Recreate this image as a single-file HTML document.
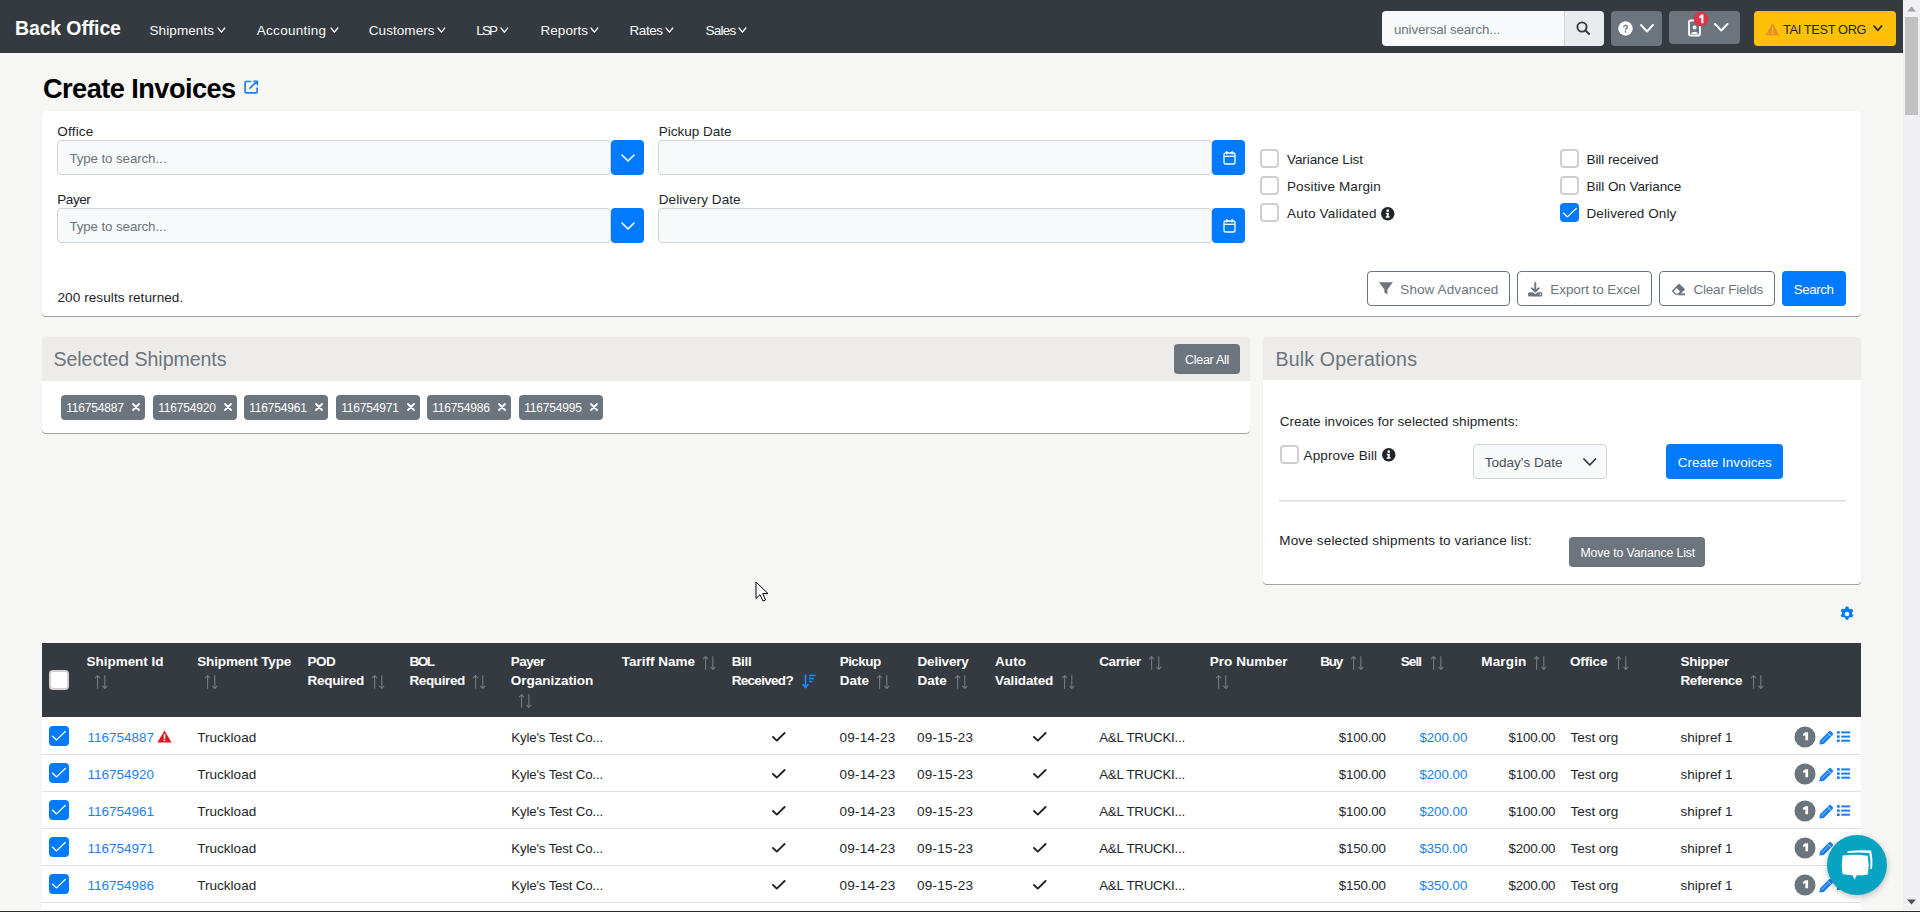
<!DOCTYPE html><html><head><meta charset="utf-8"><title>Create Invoices</title><style>
html,body{margin:0;padding:0}
body{width:1920px;height:912px;overflow:hidden;position:relative;background:#f6f6f5;font-family:"Liberation Sans",sans-serif;color:#212529}
.t{position:absolute;white-space:nowrap}
.r{position:absolute;box-sizing:border-box}
svg.r{overflow:visible}
</style></head><body>
<div class="r" style="left:0px;top:0px;width:1903px;height:53px;background:#343a40;"></div>
<div class="t" style="left:15.0px;top:17.44px;font-size:19.5px;line-height:23px;color:#fff;font-weight:700;letter-spacing:-0.135px;">Back Office</div>
<div class="t" style="left:149.5px;top:23.32px;font-size:13.5px;line-height:16px;color:#f8f9fa;letter-spacing:0.089px;">Shipments</div>
<svg class="r" style="left:215.5px;top:25.9px;" width="10.8" height="8.2" viewBox="0 0 10.8 8.2"><polyline points="2,2 5.4,6.2 8.8,2" fill="none" stroke="#f8f9fa" stroke-width="1.35" stroke-linecap="round" stroke-linejoin="round"/></svg>
<div class="t" style="left:256.8px;top:23.32px;font-size:13.5px;line-height:16px;color:#f8f9fa;letter-spacing:0.275px;">Accounting</div>
<svg class="r" style="left:328.5px;top:25.9px;" width="10.8" height="8.2" viewBox="0 0 10.8 8.2"><polyline points="2,2 5.4,6.2 8.8,2" fill="none" stroke="#f8f9fa" stroke-width="1.35" stroke-linecap="round" stroke-linejoin="round"/></svg>
<div class="t" style="left:368.8px;top:23.32px;font-size:13.5px;line-height:16px;color:#f8f9fa;letter-spacing:0.06px;">Customers</div>
<svg class="r" style="left:435.5px;top:25.9px;" width="10.8" height="8.2" viewBox="0 0 10.8 8.2"><polyline points="2,2 5.4,6.2 8.8,2" fill="none" stroke="#f8f9fa" stroke-width="1.35" stroke-linecap="round" stroke-linejoin="round"/></svg>
<div class="t" style="left:476.3px;top:23.32px;font-size:13.5px;line-height:16px;color:#f8f9fa;letter-spacing:-1.883px;">LSP</div>
<svg class="r" style="left:499.3px;top:25.9px;" width="10.8" height="8.2" viewBox="0 0 10.8 8.2"><polyline points="2,2 5.4,6.2 8.8,2" fill="none" stroke="#f8f9fa" stroke-width="1.35" stroke-linecap="round" stroke-linejoin="round"/></svg>
<div class="t" style="left:540.5px;top:23.32px;font-size:13.5px;line-height:16px;color:#f8f9fa;letter-spacing:0.042px;">Reports</div>
<svg class="r" style="left:589.0px;top:25.9px;" width="10.8" height="8.2" viewBox="0 0 10.8 8.2"><polyline points="2,2 5.4,6.2 8.8,2" fill="none" stroke="#f8f9fa" stroke-width="1.35" stroke-linecap="round" stroke-linejoin="round"/></svg>
<div class="t" style="left:629.5px;top:23.32px;font-size:13.5px;line-height:16px;color:#f8f9fa;letter-spacing:-0.434px;">Rates</div>
<svg class="r" style="left:664.3px;top:25.9px;" width="10.8" height="8.2" viewBox="0 0 10.8 8.2"><polyline points="2,2 5.4,6.2 8.8,2" fill="none" stroke="#f8f9fa" stroke-width="1.35" stroke-linecap="round" stroke-linejoin="round"/></svg>
<div class="t" style="left:705.5px;top:23.32px;font-size:13.5px;line-height:16px;color:#f8f9fa;letter-spacing:-0.75px;">Sales</div>
<svg class="r" style="left:737.3px;top:25.9px;" width="10.8" height="8.2" viewBox="0 0 10.8 8.2"><polyline points="2,2 5.4,6.2 8.8,2" fill="none" stroke="#f8f9fa" stroke-width="1.35" stroke-linecap="round" stroke-linejoin="round"/></svg>
<div class="r" style="left:1382px;top:11px;width:182px;height:35px;background:#f8f9fa;border-radius:4px 0 0 4px;"></div>
<div class="t" style="left:1394.0px;top:21.89px;font-size:13.3px;line-height:16px;color:#6c757d;letter-spacing:-0.096px;">universal search...</div>
<div class="r" style="left:1564px;top:11px;width:40px;height:35px;background:#e9ecef;border-radius:0 4px 4px 0;border-left:1px solid #ced4da;"></div>
<svg class="r" style="left:1576px;top:21px;" width="14" height="15" viewBox="0 0 14 15"><circle cx="6" cy="6" r="4.6" fill="none" stroke="#343a40" stroke-width="1.9"/><line x1="9.4" y1="9.4" x2="13" y2="13" stroke="#343a40" stroke-width="2" stroke-linecap="round"/></svg>
<div class="r" style="left:1611px;top:11px;width:51px;height:35px;background:#6c757d;border-radius:4px;"></div>
<svg class="r" style="left:1618px;top:21px;" width="15" height="15" viewBox="0 0 15 15"><circle cx="7.5" cy="7.5" r="7.2" fill="#fff"/><path d="M5.8,6.1 a1.8,1.8 0 1 1 2.6,1.6 c-0.6,0.3 -0.9,0.6 -0.9,1.3" fill="none" stroke="#6c757d" stroke-width="1.3" stroke-linecap="round"/><circle cx="7.5" cy="10.9" r="0.8" fill="#6c757d"/></svg>
<svg class="r" style="left:1639px;top:22.5px;" width="16" height="10.5" viewBox="0 0 16 10.5"><polyline points="2,2 8.0,8.5 14,2" fill="none" stroke="#fff" stroke-width="1.9" stroke-linecap="round" stroke-linejoin="round"/></svg>
<div class="r" style="left:1669px;top:11px;width:71px;height:33px;background:#6c757d;border-radius:4px;"></div>
<svg class="r" style="left:1686px;top:17px;" width="17" height="20" viewBox="0 0 17 20"><path d="M4.5,3.5 h8 a1.5,1.5 0 0 1 1.5,1.5 v12 a1.5,1.5 0 0 1 -1.5,1.5 h-8 a1.5,1.5 0 0 1 -1.5,-1.5 v-12 a1.5,1.5 0 0 1 1.5,-1.5z" fill="none" stroke="#fff" stroke-width="1.8"/><circle cx="8.5" cy="10.5" r="2" fill="#fff"/><path d="M4.5,17 q4,-4.5 8,0z" fill="#fff"/></svg>
<svg class="r" style="left:1693px;top:11px;" width="16" height="16" viewBox="0 0 16 16"><circle cx="8" cy="8" r="7.3" fill="#dc3545"/><path d="M8.3,3.6 H10.4 V12.2 H8.3 V6.6 L6.2,7.5 V5.4 Z" fill="#fff"/></svg>
<svg class="r" style="left:1713px;top:21.5px;" width="16.5" height="10.5" viewBox="0 0 16.5 10.5"><polyline points="2,2 8.25,8.5 14.5,2" fill="none" stroke="#fff" stroke-width="1.9" stroke-linecap="round" stroke-linejoin="round"/></svg>
<div class="r" style="left:1754px;top:11px;width:142px;height:35px;background:#ffc107;border-radius:4px;"></div>
<svg class="r" style="left:1765px;top:22px;" width="15" height="14" viewBox="0 0 15 14"><path d="M7.5,1 L14.5,13.5 H0.5 Z" fill="#e8912a"/><rect x="6.8" y="5" width="1.4" height="4.5" fill="#ffc107"/><rect x="6.8" y="10.5" width="1.4" height="1.5" fill="#ffc107"/></svg>
<div class="t" style="left:1783.0px;top:22.46px;font-size:12.8px;line-height:15px;color:#212529;letter-spacing:-0.363px;">TAI TEST ORG</div>
<svg class="r" style="left:1871.8px;top:23.6px;" width="11.6" height="8.4" viewBox="0 0 11.6 8.4"><polyline points="2,2 5.8,6.4 9.6,2" fill="none" stroke="#2b2f33" stroke-width="1.8" stroke-linecap="round" stroke-linejoin="round"/></svg>
<div class="r" style="left:1903px;top:0px;width:17px;height:912px;background:#f0f0f2;"></div>
<svg class="r" style="left:1906px;top:6px;" width="11" height="6" viewBox="0 0 11 6"><path d="M5.5,0.5 L10,5.5 H1 Z" fill="#a3a3a3"/></svg>
<div class="r" style="left:1905px;top:17px;width:13px;height:98px;background:#c1c1c1;"></div>
<svg class="r" style="left:1906px;top:899px;" width="11" height="6" viewBox="0 0 11 6"><path d="M1,0.5 H10 L5.5,5.5 Z" fill="#505050"/></svg>
<div class="t" style="left:43.0px;top:71.98px;font-size:27.2px;line-height:33px;color:#000;font-weight:700;letter-spacing:-0.553px;">Create Invoices</div>
<svg class="r" style="left:243px;top:79px;" width="17" height="17" viewBox="0 0 17 17"><path d="M7.5,2.5 H3.1 a1,1 0 0 0 -1,1 V12.8 a1,1 0 0 0 1,1 H13.1 a1,1 0 0 0 1,-1 V9" fill="none" stroke="#1a7ff5" stroke-width="1.7" stroke-linecap="round"/><path d="M7,9.2 L12.6,3.6" fill="none" stroke="#1a7ff5" stroke-width="1.7" stroke-linecap="round"/><path d="M9.6,1.4 H15.1 V6.9 Z" fill="#1a7ff5"/></svg>
<div class="r" style="left:42px;top:111px;width:1819px;height:205px;background:#fff;border-radius:4px;box-shadow:0 1px 0.6px rgba(0,0,0,0.33),0 0 1px rgba(0,0,0,0.1);"></div>
<div class="t" style="left:57.3px;top:123.62px;font-size:13.5px;line-height:16px;color:#212529;letter-spacing:0.194px;">Office</div>
<div class="r" style="left:57px;top:140px;width:554px;height:35px;background:#f8f9fa;border:1px solid #ced4da;border-radius:4px;"></div>
<div class="t" style="left:69.4px;top:150.59px;font-size:13.3px;line-height:16px;color:#6c757d;letter-spacing:-0.085px;">Type to search...</div>
<div class="r" style="left:611px;top:140px;width:33px;height:35px;background:#007bff;border-radius:4px;"></div>
<svg class="r" style="left:620.2px;top:153px;" width="16" height="10" viewBox="0 0 16 10"><polyline points="2,2 8.0,8 14,2" fill="none" stroke="#fff" stroke-width="1.6" stroke-linecap="round" stroke-linejoin="round"/></svg>
<div class="t" style="left:57.3px;top:191.62px;font-size:13.5px;line-height:16px;color:#212529;letter-spacing:-0.459px;">Payer</div>
<div class="r" style="left:57px;top:208px;width:554px;height:35px;background:#f8f9fa;border:1px solid #ced4da;border-radius:4px;"></div>
<div class="t" style="left:69.4px;top:218.59px;font-size:13.3px;line-height:16px;color:#6c757d;letter-spacing:-0.085px;">Type to search...</div>
<div class="r" style="left:611px;top:208px;width:33px;height:35px;background:#007bff;border-radius:4px;"></div>
<svg class="r" style="left:620.2px;top:221px;" width="16" height="10" viewBox="0 0 16 10"><polyline points="2,2 8.0,8 14,2" fill="none" stroke="#fff" stroke-width="1.6" stroke-linecap="round" stroke-linejoin="round"/></svg>
<div class="t" style="left:658.8px;top:123.72px;font-size:13.5px;line-height:16px;color:#212529;letter-spacing:-0.006px;">Pickup Date</div>
<div class="r" style="left:658px;top:140px;width:554px;height:35px;background:#f8f9fa;border:1px solid #ced4da;border-radius:4px;"></div>
<div class="r" style="left:1212px;top:140px;width:33px;height:35px;background:#007bff;border-radius:4px;"></div>
<svg class="r" style="left:1222.5px;top:149.8px;" width="13" height="15" viewBox="0 0 13 15"><rect x="1" y="3" width="11" height="11" rx="1.6" fill="none" stroke="#fff" stroke-width="1.3"/><line x1="1" y1="6.3" x2="12" y2="6.3" stroke="#fff" stroke-width="1.3"/><line x1="3.8" y1="1" x2="3.8" y2="4.5" stroke="#fff" stroke-width="1.3"/><line x1="9.2" y1="1" x2="9.2" y2="4.5" stroke="#fff" stroke-width="1.3"/></svg>
<div class="t" style="left:658.8px;top:191.62px;font-size:13.5px;line-height:16px;color:#212529;letter-spacing:0.058px;">Delivery Date</div>
<div class="r" style="left:658px;top:208px;width:554px;height:35px;background:#f8f9fa;border:1px solid #ced4da;border-radius:4px;"></div>
<div class="r" style="left:1212px;top:208px;width:33px;height:35px;background:#007bff;border-radius:4px;"></div>
<svg class="r" style="left:1222.5px;top:217.8px;" width="13" height="15" viewBox="0 0 13 15"><rect x="1" y="3" width="11" height="11" rx="1.6" fill="none" stroke="#fff" stroke-width="1.3"/><line x1="1" y1="6.3" x2="12" y2="6.3" stroke="#fff" stroke-width="1.3"/><line x1="3.8" y1="1" x2="3.8" y2="4.5" stroke="#fff" stroke-width="1.3"/><line x1="9.2" y1="1" x2="9.2" y2="4.5" stroke="#fff" stroke-width="1.3"/></svg>
<div class="r" style="left:1260px;top:149px;width:19px;height:19px;background:#fff;border:2px solid #cfcfcf;border-radius:4px;"></div>
<div class="t" style="left:1287.0px;top:152.42px;font-size:13.5px;line-height:16px;color:#212529;letter-spacing:-0.085px;">Variance List</div>
<div class="r" style="left:1260px;top:176px;width:19px;height:19px;background:#fff;border:2px solid #cfcfcf;border-radius:4px;"></div>
<div class="t" style="left:1287.0px;top:179.42px;font-size:13.5px;line-height:16px;color:#212529;letter-spacing:0.102px;">Positive Margin</div>
<div class="r" style="left:1260px;top:203px;width:19px;height:19px;background:#fff;border:2px solid #cfcfcf;border-radius:4px;"></div>
<div class="t" style="left:1287.0px;top:206.42px;font-size:13.5px;line-height:16px;color:#212529;letter-spacing:0.207px;">Auto Validated</div>
<div class="r" style="left:1559.5px;top:149px;width:19.0px;height:19px;background:#fff;border:2px solid #cfcfcf;border-radius:4px;"></div>
<div class="t" style="left:1586.5px;top:152.42px;font-size:13.5px;line-height:16px;color:#212529;letter-spacing:-0.072px;">Bill received</div>
<div class="r" style="left:1559.5px;top:176px;width:19.0px;height:19px;background:#fff;border:2px solid #cfcfcf;border-radius:4px;"></div>
<div class="t" style="left:1586.5px;top:179.42px;font-size:13.5px;line-height:16px;color:#212529;letter-spacing:-0.066px;">Bill On Variance</div>
<div class="r" style="left:1559.5px;top:203px;width:19.0px;height:19px;background:#007bff;border-radius:4px;"></div>
<svg class="r" style="left:1559.5px;top:203px;" width="19" height="19" viewBox="0 0 19 19"><polyline points="3.4,10.1 7.5,13.9 16.3,5.5" fill="none" stroke="#fff" stroke-width="1.3" stroke-linecap="round" stroke-linejoin="round"/></svg>
<div class="t" style="left:1586.5px;top:206.42px;font-size:13.5px;line-height:16px;color:#212529;letter-spacing:0.095px;">Delivered Only</div>
<svg class="r" style="left:1381px;top:206.8px;" width="13.5" height="13.5" viewBox="0 0 13.5 13.5"><circle cx="6.75" cy="6.75" r="6.75" fill="#212529"/><circle cx="6.75" cy="3.6450000000000005" r="1.2825" fill="#fff"/><path d="M4.75,5.67 H7.75 V9.180000000000001 H8.55 V10.8 H4.75 V9.180000000000001 H5.75 V7.155 H4.75 Z" fill="#fff"/></svg>
<div class="r" style="left:1367px;top:271px;width:143px;height:35px;background:#fff;border:1px solid #6c757d;border-radius:4px;"></div>
<div class="t" style="left:1400.3px;top:281.62px;font-size:13.5px;line-height:16px;color:#6c757d;letter-spacing:0.1px;">Show Advanced</div>
<svg class="r" style="left:1379px;top:282px;" width="14" height="13" viewBox="0 0 14 13"><path d="M0,0.3 H13.9 L8.4,7.4 V12.6 L5.4,10.6 V7.4 Z" fill="#6c757d"/></svg>
<div class="r" style="left:1517px;top:271px;width:135px;height:35px;background:#fff;border:1px solid #6c757d;border-radius:4px;"></div>
<div class="t" style="left:1550.3px;top:281.62px;font-size:13.5px;line-height:16px;color:#6c757d;letter-spacing:-0.078px;">Export to Excel</div>
<svg class="r" style="left:1528px;top:281.5px;" width="15" height="15" viewBox="0 0 15 15"><path d="M7.3,1 V9.5 M3.8,6.2 L7.3,9.7 L10.8,6.2" fill="none" stroke="#6c757d" stroke-width="1.9" stroke-linecap="round" stroke-linejoin="round"/><path d="M1.5,10.3 H5 L7.3,12.3 L9.6,10.3 H12.8 a1.5,1.5 0 0 1 1.5,1.5 V12.9 a1.5,1.5 0 0 1 -1.5,1.5 H1.5 a1.5,1.5 0 0 1 -1.5,-1.5 V11.8 a1.5,1.5 0 0 1 1.5,-1.5 Z" fill="#6c757d"/><circle cx="12.3" cy="12.2" r="0.8" fill="#fff"/></svg>
<div class="r" style="left:1659px;top:271px;width:116px;height:35px;background:#fff;border:1px solid #6c757d;border-radius:4px;"></div>
<div class="t" style="left:1693.5px;top:281.62px;font-size:13.5px;line-height:16px;color:#6c757d;letter-spacing:-0.211px;">Clear Fields</div>
<svg class="r" style="left:1671px;top:282.5px;" width="15" height="13" viewBox="0 0 15 13"><path d="M0.7,8.1 L7.2,1.2 a1.1,1.1 0 0 1 1.6,0 L13.4,5.6 a1.1,1.1 0 0 1 0,1.6 L8.4,11.8 H4.2 Z" fill="#6c757d"/><path d="M2.7,8.1 L5.6,5.1 L9,8.6 L7,10.4 H4.6 Z" fill="#fff"/><rect x="7.6" y="10.4" width="6.4" height="1.9" fill="#6c757d"/></svg>
<div class="r" style="left:1782px;top:271px;width:64px;height:35px;background:#007bff;border-radius:4px;"></div>
<div class="t" style="left:1793.8px;top:281.69px;font-size:13.3px;line-height:16px;color:#fff;letter-spacing:-0.412px;">Search</div>
<div class="t" style="left:57.5px;top:289.69px;font-size:13.6px;line-height:16px;color:#212529;letter-spacing:0.054px;">200 results returned.</div>
<div class="r" style="left:42px;top:337px;width:1208px;height:96px;background:#fff;border-radius:4px;box-shadow:0 1px 0.6px rgba(0,0,0,0.33),0 0 1px rgba(0,0,0,0.1);overflow:hidden;"></div>
<div class="r" style="left:42px;top:337px;width:1208px;height:44px;background:#edecea;border-radius:4px 4px 0 0;"></div>
<div class="t" style="left:53.5px;top:346.91px;font-size:19.6px;line-height:24px;color:#6c757d;letter-spacing:-0.073px;">Selected Shipments</div>
<div class="r" style="left:1174px;top:344px;width:66px;height:30px;background:#6c757d;border-radius:4px;"></div>
<div class="t" style="left:1185.0px;top:352.87px;font-size:12.5px;line-height:15px;color:#fff;letter-spacing:-0.283px;">Clear All</div>
<div class="r" style="left:61px;top:395px;width:84px;height:25px;background:#6c757d;border-radius:4px;"></div>
<div class="t" style="left:66.2px;top:401.34px;font-size:12px;line-height:14px;color:#fff;letter-spacing:-0.17px;">116754887</div>
<svg class="r" style="left:132px;top:402.5px;" width="8" height="8" viewBox="0 0 8 8"><path d="M1,1 L7,7 M7,1 L1,7" stroke="#fff" stroke-width="1.8" stroke-linecap="round"/></svg>
<div class="r" style="left:153px;top:395px;width:84px;height:25px;background:#6c757d;border-radius:4px;"></div>
<div class="t" style="left:158.2px;top:401.34px;font-size:12px;line-height:14px;color:#fff;letter-spacing:-0.17px;">116754920</div>
<svg class="r" style="left:224px;top:402.5px;" width="8" height="8" viewBox="0 0 8 8"><path d="M1,1 L7,7 M7,1 L1,7" stroke="#fff" stroke-width="1.8" stroke-linecap="round"/></svg>
<div class="r" style="left:244px;top:395px;width:84px;height:25px;background:#6c757d;border-radius:4px;"></div>
<div class="t" style="left:249.2px;top:401.34px;font-size:12px;line-height:14px;color:#fff;letter-spacing:-0.17px;">116754961</div>
<svg class="r" style="left:315px;top:402.5px;" width="8" height="8" viewBox="0 0 8 8"><path d="M1,1 L7,7 M7,1 L1,7" stroke="#fff" stroke-width="1.8" stroke-linecap="round"/></svg>
<div class="r" style="left:336px;top:395px;width:84px;height:25px;background:#6c757d;border-radius:4px;"></div>
<div class="t" style="left:341.2px;top:401.34px;font-size:12px;line-height:14px;color:#fff;letter-spacing:-0.17px;">116754971</div>
<svg class="r" style="left:407px;top:402.5px;" width="8" height="8" viewBox="0 0 8 8"><path d="M1,1 L7,7 M7,1 L1,7" stroke="#fff" stroke-width="1.8" stroke-linecap="round"/></svg>
<div class="r" style="left:427px;top:395px;width:84px;height:25px;background:#6c757d;border-radius:4px;"></div>
<div class="t" style="left:432.2px;top:401.34px;font-size:12px;line-height:14px;color:#fff;letter-spacing:-0.17px;">116754986</div>
<svg class="r" style="left:498px;top:402.5px;" width="8" height="8" viewBox="0 0 8 8"><path d="M1,1 L7,7 M7,1 L1,7" stroke="#fff" stroke-width="1.8" stroke-linecap="round"/></svg>
<div class="r" style="left:519px;top:395px;width:84px;height:25px;background:#6c757d;border-radius:4px;"></div>
<div class="t" style="left:524.2px;top:401.34px;font-size:12px;line-height:14px;color:#fff;letter-spacing:-0.17px;">116754995</div>
<svg class="r" style="left:590px;top:402.5px;" width="8" height="8" viewBox="0 0 8 8"><path d="M1,1 L7,7 M7,1 L1,7" stroke="#fff" stroke-width="1.8" stroke-linecap="round"/></svg>
<div class="r" style="left:1263px;top:337px;width:598px;height:247px;background:#fff;border-radius:4px;box-shadow:0 1px 0.6px rgba(0,0,0,0.33),0 0 1px rgba(0,0,0,0.1);"></div>
<div class="r" style="left:1263px;top:337px;width:598px;height:43px;background:#edecea;border-radius:4px 4px 0 0;"></div>
<div class="t" style="left:1275.6px;top:346.91px;font-size:19.6px;line-height:24px;color:#6c757d;letter-spacing:0.139px;">Bulk Operations</div>
<div class="t" style="left:1279.7px;top:413.72px;font-size:13.5px;line-height:16px;color:#212529;letter-spacing:0.078px;">Create invoices for selected shipments:</div>
<div class="r" style="left:1279.5px;top:444.5px;width:19.0px;height:19.0px;background:#fff;border:2px solid #cfcfcf;border-radius:4px;"></div>
<div class="t" style="left:1303.6px;top:448.02px;font-size:13.5px;line-height:16px;color:#212529;letter-spacing:0.125px;">Approve Bill</div>
<svg class="r" style="left:1381.7px;top:448.3px;" width="13.5" height="13.5" viewBox="0 0 13.5 13.5"><circle cx="6.75" cy="6.75" r="6.75" fill="#212529"/><circle cx="6.75" cy="3.6450000000000005" r="1.2825" fill="#fff"/><path d="M4.75,5.67 H7.75 V9.180000000000001 H8.55 V10.8 H4.75 V9.180000000000001 H5.75 V7.155 H4.75 Z" fill="#fff"/></svg>
<div class="r" style="left:1473px;top:444px;width:134px;height:35px;background:#f8f9fa;border:1px solid #ced4da;border-radius:4px;"></div>
<div class="t" style="left:1484.8px;top:455.22px;font-size:13.5px;line-height:16px;color:#495057;letter-spacing:-0.002px;">Today's Date</div>
<svg class="r" style="left:1581.5px;top:457px;" width="15.5" height="10" viewBox="0 0 15.5 10"><polyline points="2,2 7.75,8 13.5,2" fill="none" stroke="#343a40" stroke-width="1.8" stroke-linecap="round" stroke-linejoin="round"/></svg>
<div class="r" style="left:1666px;top:444px;width:117px;height:35px;background:#007bff;border-radius:4px;"></div>
<div class="t" style="left:1677.8px;top:455.22px;font-size:13.5px;line-height:16px;color:#fff;letter-spacing:0.005px;">Create Invoices</div>
<div class="r" style="left:1279px;top:500px;width:567px;height:1px;background:#dadada;"></div>
<div class="r" style="left:1279px;top:501px;width:567px;height:1px;background:#f0f0f0;"></div>
<div class="t" style="left:1279.3px;top:532.82px;font-size:13.5px;line-height:16px;color:#212529;letter-spacing:0.157px;">Move selected shipments to variance list:</div>
<div class="r" style="left:1569px;top:537px;width:136px;height:30px;background:#6c757d;border-radius:4px;"></div>
<div class="t" style="left:1580.4px;top:546.04px;font-size:12.3px;line-height:15px;color:#fff;letter-spacing:-0.127px;">Move to Variance List</div>
<svg class="r" style="left:1839.3px;top:605.6px;" width="16" height="16" viewBox="0 0 16 16"><g transform="translate(8,8)"><path fill="#007bff" d="M-1.3,-7.5 h2.6 l0.45,1.9 a5.6,5.6 0 0 1 1.45,0.85 l1.85,-0.6 l1.3,2.25 l-1.4,1.35 a5.6,5.6 0 0 1 0,1.7 l1.4,1.35 l-1.3,2.25 l-1.85,-0.6 a5.6,5.6 0 0 1 -1.45,0.85 l-0.45,1.9 h-2.6 l-0.45,-1.9 a5.6,5.6 0 0 1 -1.45,-0.85 l-1.85,0.6 l-1.3,-2.25 l1.4,-1.35 a5.6,5.6 0 0 1 0,-1.7 l-1.4,-1.35 l1.3,-2.25 l1.85,0.6 a5.6,5.6 0 0 1 1.45,-0.85 z"/><circle r="2.3" fill="#f6f6f5"/></g></svg>
<div class="r" style="left:42px;top:643px;width:1819px;height:269px;background:#fff;"></div>
<div class="r" style="left:42px;top:643px;width:1819px;height:74px;background:#343a40;"></div>
<div class="r" style="left:49px;top:670px;width:20px;height:20px;background:#fff;border:2px solid #d0d0d0;border-radius:4px;"></div>
<div class="t" style="left:86.6px;top:653.62px;font-size:13.5px;line-height:16px;color:#fff;font-weight:700;letter-spacing:-0.042px;">Shipment Id</div>
<svg class="r" style="left:94.5px;top:675px;" width="13" height="14" viewBox="0 0 13 14"><path d="M2.6,13.8 V0.6 M0.2,3.2 L2.6,0.5 L5,3.2" fill="none" stroke="#767b80" stroke-width="1.1" stroke-linejoin="round"/><path d="M9.8,0.2 V13.4 M7.4,10.8 L9.8,13.5 L12.2,10.8" fill="none" stroke="#767b80" stroke-width="1.1" stroke-linejoin="round"/></svg>
<div class="t" style="left:197.2px;top:653.62px;font-size:13.5px;line-height:16px;color:#fff;font-weight:700;letter-spacing:-0.14px;">Shipment Type</div>
<svg class="r" style="left:204.7px;top:675px;" width="13" height="14" viewBox="0 0 13 14"><path d="M2.6,13.8 V0.6 M0.2,3.2 L2.6,0.5 L5,3.2" fill="none" stroke="#767b80" stroke-width="1.1" stroke-linejoin="round"/><path d="M9.8,0.2 V13.4 M7.4,10.8 L9.8,13.5 L12.2,10.8" fill="none" stroke="#767b80" stroke-width="1.1" stroke-linejoin="round"/></svg>
<div class="t" style="left:307.5px;top:653.62px;font-size:13.5px;line-height:16px;color:#fff;font-weight:700;letter-spacing:-0.464px;">POD</div>
<div class="t" style="left:307.5px;top:672.72px;font-size:13.5px;line-height:16px;color:#fff;font-weight:700;letter-spacing:-0.26px;">Required</div>
<svg class="r" style="left:371.7px;top:675px;" width="13" height="14" viewBox="0 0 13 14"><path d="M2.6,13.8 V0.6 M0.2,3.2 L2.6,0.5 L5,3.2" fill="none" stroke="#767b80" stroke-width="1.1" stroke-linejoin="round"/><path d="M9.8,0.2 V13.4 M7.4,10.8 L9.8,13.5 L12.2,10.8" fill="none" stroke="#767b80" stroke-width="1.1" stroke-linejoin="round"/></svg>
<div class="t" style="left:409.5px;top:653.62px;font-size:13.5px;line-height:16px;color:#fff;font-weight:700;letter-spacing:-1.492px;">BOL</div>
<div class="t" style="left:409.5px;top:672.72px;font-size:13.5px;line-height:16px;color:#fff;font-weight:700;letter-spacing:-0.389px;">Required</div>
<svg class="r" style="left:473.3px;top:675px;" width="13" height="14" viewBox="0 0 13 14"><path d="M2.6,13.8 V0.6 M0.2,3.2 L2.6,0.5 L5,3.2" fill="none" stroke="#767b80" stroke-width="1.1" stroke-linejoin="round"/><path d="M9.8,0.2 V13.4 M7.4,10.8 L9.8,13.5 L12.2,10.8" fill="none" stroke="#767b80" stroke-width="1.1" stroke-linejoin="round"/></svg>
<div class="t" style="left:510.8px;top:653.62px;font-size:13.5px;line-height:16px;color:#fff;font-weight:700;letter-spacing:-0.572px;">Payer</div>
<div class="t" style="left:510.8px;top:672.72px;font-size:13.5px;line-height:16px;color:#fff;font-weight:700;letter-spacing:0.001px;">Organization</div>
<svg class="r" style="left:518.7px;top:694px;" width="13" height="14" viewBox="0 0 13 14"><path d="M2.6,13.8 V0.6 M0.2,3.2 L2.6,0.5 L5,3.2" fill="none" stroke="#767b80" stroke-width="1.1" stroke-linejoin="round"/><path d="M9.8,0.2 V13.4 M7.4,10.8 L9.8,13.5 L12.2,10.8" fill="none" stroke="#767b80" stroke-width="1.1" stroke-linejoin="round"/></svg>
<div class="t" style="left:621.7px;top:653.62px;font-size:13.5px;line-height:16px;color:#fff;font-weight:700;letter-spacing:0.006px;">Tariff Name</div>
<svg class="r" style="left:702.5px;top:656px;" width="13" height="14" viewBox="0 0 13 14"><path d="M2.6,13.8 V0.6 M0.2,3.2 L2.6,0.5 L5,3.2" fill="none" stroke="#767b80" stroke-width="1.1" stroke-linejoin="round"/><path d="M9.8,0.2 V13.4 M7.4,10.8 L9.8,13.5 L12.2,10.8" fill="none" stroke="#767b80" stroke-width="1.1" stroke-linejoin="round"/></svg>
<div class="t" style="left:731.7px;top:653.62px;font-size:13.5px;line-height:16px;color:#fff;font-weight:700;letter-spacing:-0.331px;">Bill</div>
<div class="t" style="left:731.7px;top:672.72px;font-size:13.5px;line-height:16px;color:#fff;font-weight:700;letter-spacing:-0.696px;">Received?</div>
<svg class="r" style="left:801.7px;top:674px;" width="14" height="15" viewBox="0 0 14 15"><path d="M3.5,0.5 V13.5 M0.6,10.3 L3.5,13.6 L6.4,10.3" fill="none" stroke="#1e88f5" stroke-width="1.7" stroke-linejoin="round"/><path d="M7,1.5 H13.5 M7,4.5 H12 M7,7.5 H10.5" stroke="#1e88f5" stroke-width="1.5"/></svg>
<div class="t" style="left:839.7px;top:653.62px;font-size:13.5px;line-height:16px;color:#fff;font-weight:700;letter-spacing:-0.536px;">Pickup</div>
<div class="t" style="left:839.7px;top:672.72px;font-size:13.5px;line-height:16px;color:#fff;font-weight:700;letter-spacing:0.002px;">Date</div>
<svg class="r" style="left:876.7px;top:675px;" width="13" height="14" viewBox="0 0 13 14"><path d="M2.6,13.8 V0.6 M0.2,3.2 L2.6,0.5 L5,3.2" fill="none" stroke="#767b80" stroke-width="1.1" stroke-linejoin="round"/><path d="M9.8,0.2 V13.4 M7.4,10.8 L9.8,13.5 L12.2,10.8" fill="none" stroke="#767b80" stroke-width="1.1" stroke-linejoin="round"/></svg>
<div class="t" style="left:917.5px;top:653.62px;font-size:13.5px;line-height:16px;color:#fff;font-weight:700;letter-spacing:-0.174px;">Delivery</div>
<div class="t" style="left:917.5px;top:672.72px;font-size:13.5px;line-height:16px;color:#fff;font-weight:700;letter-spacing:-0.032px;">Date</div>
<svg class="r" style="left:954.7px;top:675px;" width="13" height="14" viewBox="0 0 13 14"><path d="M2.6,13.8 V0.6 M0.2,3.2 L2.6,0.5 L5,3.2" fill="none" stroke="#767b80" stroke-width="1.1" stroke-linejoin="round"/><path d="M9.8,0.2 V13.4 M7.4,10.8 L9.8,13.5 L12.2,10.8" fill="none" stroke="#767b80" stroke-width="1.1" stroke-linejoin="round"/></svg>
<div class="t" style="left:995.0px;top:653.62px;font-size:13.5px;line-height:16px;color:#fff;font-weight:700;letter-spacing:0.096px;">Auto</div>
<div class="t" style="left:995.0px;top:672.72px;font-size:13.5px;line-height:16px;color:#fff;font-weight:700;letter-spacing:-0.121px;">Validated</div>
<svg class="r" style="left:1061.7px;top:675px;" width="13" height="14" viewBox="0 0 13 14"><path d="M2.6,13.8 V0.6 M0.2,3.2 L2.6,0.5 L5,3.2" fill="none" stroke="#767b80" stroke-width="1.1" stroke-linejoin="round"/><path d="M9.8,0.2 V13.4 M7.4,10.8 L9.8,13.5 L12.2,10.8" fill="none" stroke="#767b80" stroke-width="1.1" stroke-linejoin="round"/></svg>
<div class="t" style="left:1099.2px;top:653.62px;font-size:13.5px;line-height:16px;color:#fff;font-weight:700;letter-spacing:-0.363px;">Carrier</div>
<svg class="r" style="left:1148.7px;top:656px;" width="13" height="14" viewBox="0 0 13 14"><path d="M2.6,13.8 V0.6 M0.2,3.2 L2.6,0.5 L5,3.2" fill="none" stroke="#767b80" stroke-width="1.1" stroke-linejoin="round"/><path d="M9.8,0.2 V13.4 M7.4,10.8 L9.8,13.5 L12.2,10.8" fill="none" stroke="#767b80" stroke-width="1.1" stroke-linejoin="round"/></svg>
<div class="t" style="left:1209.7px;top:653.62px;font-size:13.5px;line-height:16px;color:#fff;font-weight:700;letter-spacing:0.057px;">Pro Number</div>
<svg class="r" style="left:1216.3px;top:675px;" width="13" height="14" viewBox="0 0 13 14"><path d="M2.6,13.8 V0.6 M0.2,3.2 L2.6,0.5 L5,3.2" fill="none" stroke="#767b80" stroke-width="1.1" stroke-linejoin="round"/><path d="M9.8,0.2 V13.4 M7.4,10.8 L9.8,13.5 L12.2,10.8" fill="none" stroke="#767b80" stroke-width="1.1" stroke-linejoin="round"/></svg>
<div class="t" style="left:1320.3px;top:653.62px;font-size:13.5px;line-height:16px;color:#fff;font-weight:700;letter-spacing:-1.258px;">Buy</div>
<svg class="r" style="left:1350.8px;top:656px;" width="13" height="14" viewBox="0 0 13 14"><path d="M2.6,13.8 V0.6 M0.2,3.2 L2.6,0.5 L5,3.2" fill="none" stroke="#767b80" stroke-width="1.1" stroke-linejoin="round"/><path d="M9.8,0.2 V13.4 M7.4,10.8 L9.8,13.5 L12.2,10.8" fill="none" stroke="#767b80" stroke-width="1.1" stroke-linejoin="round"/></svg>
<div class="t" style="left:1400.8px;top:653.62px;font-size:13.5px;line-height:16px;color:#fff;font-weight:700;letter-spacing:-0.943px;">Sell</div>
<svg class="r" style="left:1430.8px;top:656px;" width="13" height="14" viewBox="0 0 13 14"><path d="M2.6,13.8 V0.6 M0.2,3.2 L2.6,0.5 L5,3.2" fill="none" stroke="#767b80" stroke-width="1.1" stroke-linejoin="round"/><path d="M9.8,0.2 V13.4 M7.4,10.8 L9.8,13.5 L12.2,10.8" fill="none" stroke="#767b80" stroke-width="1.1" stroke-linejoin="round"/></svg>
<div class="t" style="left:1481.3px;top:653.62px;font-size:13.5px;line-height:16px;color:#fff;font-weight:700;letter-spacing:0.144px;">Margin</div>
<svg class="r" style="left:1533.7px;top:656px;" width="13" height="14" viewBox="0 0 13 14"><path d="M2.6,13.8 V0.6 M0.2,3.2 L2.6,0.5 L5,3.2" fill="none" stroke="#767b80" stroke-width="1.1" stroke-linejoin="round"/><path d="M9.8,0.2 V13.4 M7.4,10.8 L9.8,13.5 L12.2,10.8" fill="none" stroke="#767b80" stroke-width="1.1" stroke-linejoin="round"/></svg>
<div class="t" style="left:1570.0px;top:653.62px;font-size:13.5px;line-height:16px;color:#fff;font-weight:700;letter-spacing:-0.155px;">Office</div>
<svg class="r" style="left:1615.8px;top:656px;" width="13" height="14" viewBox="0 0 13 14"><path d="M2.6,13.8 V0.6 M0.2,3.2 L2.6,0.5 L5,3.2" fill="none" stroke="#767b80" stroke-width="1.1" stroke-linejoin="round"/><path d="M9.8,0.2 V13.4 M7.4,10.8 L9.8,13.5 L12.2,10.8" fill="none" stroke="#767b80" stroke-width="1.1" stroke-linejoin="round"/></svg>
<div class="t" style="left:1680.5px;top:653.62px;font-size:13.5px;line-height:16px;color:#fff;font-weight:700;letter-spacing:-0.265px;">Shipper</div>
<div class="t" style="left:1680.5px;top:672.72px;font-size:13.5px;line-height:16px;color:#fff;font-weight:700;letter-spacing:-0.422px;">Reference</div>
<svg class="r" style="left:1750.5px;top:675px;" width="13" height="14" viewBox="0 0 13 14"><path d="M2.6,13.8 V0.6 M0.2,3.2 L2.6,0.5 L5,3.2" fill="none" stroke="#767b80" stroke-width="1.1" stroke-linejoin="round"/><path d="M9.8,0.2 V13.4 M7.4,10.8 L9.8,13.5 L12.2,10.8" fill="none" stroke="#767b80" stroke-width="1.1" stroke-linejoin="round"/></svg>
<div class="r" style="left:42px;top:754px;width:1819px;height:1px;background:#dee2e6;"></div>
<div class="r" style="left:49px;top:726.3px;width:20px;height:20.0px;background:#007bff;border-radius:4px;"></div>
<svg class="r" style="left:49px;top:726.3px;" width="20" height="20" viewBox="0 0 20 20"><polyline points="3.4,10.1 7.5,13.9 16.3,5.5" fill="none" stroke="#fff" stroke-width="1.3" stroke-linecap="round" stroke-linejoin="round"/></svg>
<div class="t" style="left:87.4px;top:729.62px;font-size:13.5px;line-height:16px;color:#1a7ff0;letter-spacing:0.018px;">116754887</div>
<svg class="r" style="left:157px;top:730px;" width="15" height="13" viewBox="0 0 15 13"><path d="M7.5,0.6 L14.6,12.6 H0.4 Z" fill="#e4161d"/><rect x="6.7" y="4" width="1.6" height="4.8" fill="#fff"/><rect x="6.7" y="9.6" width="1.6" height="1.6" fill="#fff"/></svg>
<div class="t" style="left:197.2px;top:729.62px;font-size:13.5px;line-height:16px;color:#212529;letter-spacing:0.026px;">Truckload</div>
<div class="t" style="left:511.3px;top:729.69px;font-size:13.3px;line-height:16px;color:#212529;letter-spacing:-0.168px;">Kyle's Test Co...</div>
<svg class="r" style="left:771.5px;top:732px;" width="14" height="10" viewBox="0 0 14 10"><polyline points="1,5 4.8,8.6 12.6,1" fill="none" stroke="#212529" stroke-width="1.9" stroke-linecap="round" stroke-linejoin="round"/></svg>
<div class="t" style="left:839.4px;top:729.62px;font-size:13.5px;line-height:16px;color:#212529;letter-spacing:0.247px;">09-14-23</div>
<div class="t" style="left:917.0px;top:729.62px;font-size:13.5px;line-height:16px;color:#212529;letter-spacing:0.276px;">09-15-23</div>
<svg class="r" style="left:1033px;top:732px;" width="14" height="10" viewBox="0 0 14 10"><polyline points="1,5 4.8,8.6 12.6,1" fill="none" stroke="#212529" stroke-width="1.9" stroke-linecap="round" stroke-linejoin="round"/></svg>
<div class="t" style="left:1099.2px;top:729.69px;font-size:13.3px;line-height:16px;color:#212529;letter-spacing:-0.218px;">A&amp;L TRUCKI...</div>
<div class="t" style="left:1338.8px;top:729.69px;font-size:13.3px;line-height:16px;color:#212529;letter-spacing:-0.147px;">$100.00</div>
<div class="t" style="left:1419.4px;top:729.69px;font-size:13.3px;line-height:16px;color:#1a7ff0;letter-spacing:-0.03px;">$200.00</div>
<div class="t" style="left:1508.6px;top:729.69px;font-size:13.3px;line-height:16px;color:#212529;letter-spacing:-0.197px;">$100.00</div>
<div class="t" style="left:1570.5px;top:729.62px;font-size:13.5px;line-height:16px;color:#212529;letter-spacing:-0.028px;">Test org</div>
<div class="t" style="left:1680.5px;top:729.62px;font-size:13.5px;line-height:16px;color:#212529;letter-spacing:0.028px;">shipref 1</div>
<svg class="r" style="left:1793.6px;top:725.6px;" width="22" height="22" viewBox="0 0 22 22"><circle cx="11" cy="11" r="10.5" fill="#6c757d"/><path d="M11.4,6.2 H14.1 V14.2 H11.4 V9.2 L9.1,10 V7.7 Z" fill="#fff"/></svg>
<svg class="r" style="left:1819px;top:729.5px;" width="15" height="15" viewBox="0 0 15 15"><path d="M0.3,14.4 L1.1,10.2 L10,1.3 a1.4,1.4 0 0 1 2,0 L13.7,3 a1.4,1.4 0 0 1 0,2 L4.8,13.9 Z" fill="#1a7ff5"/><path d="M8.6,2.9 L12.1,6.4" stroke="#fff" stroke-width="0.8"/><path d="M2.6,11.9 L9.4,5.1" stroke="#cfe5ff" stroke-width="0.6"/></svg>
<svg class="r" style="left:1837px;top:731px;" width="14" height="12" viewBox="0 0 14 12"><rect x="0" y="0.1" width="2.7" height="2.6" fill="#1a7ff5"/><rect x="0" y="4.3" width="2.7" height="2.6" fill="#1a7ff5"/><rect x="0" y="8.4" width="2.7" height="2.6" fill="#1a7ff5"/><rect x="4.2" y="0.4" width="8.9" height="2" fill="#1a7ff5"/><rect x="4.2" y="4.6" width="8.9" height="2" fill="#1a7ff5"/><rect x="4.2" y="8.7" width="8.9" height="2" fill="#1a7ff5"/></svg>
<div class="r" style="left:42px;top:791px;width:1819px;height:1px;background:#dee2e6;"></div>
<div class="r" style="left:49px;top:763.3px;width:20px;height:20.0px;background:#007bff;border-radius:4px;"></div>
<svg class="r" style="left:49px;top:763.3px;" width="20" height="20" viewBox="0 0 20 20"><polyline points="3.4,10.1 7.5,13.9 16.3,5.5" fill="none" stroke="#fff" stroke-width="1.3" stroke-linecap="round" stroke-linejoin="round"/></svg>
<div class="t" style="left:87.4px;top:766.62px;font-size:13.5px;line-height:16px;color:#1a7ff0;letter-spacing:0.018px;">116754920</div>
<div class="t" style="left:197.2px;top:766.62px;font-size:13.5px;line-height:16px;color:#212529;letter-spacing:0.026px;">Truckload</div>
<div class="t" style="left:511.3px;top:766.69px;font-size:13.3px;line-height:16px;color:#212529;letter-spacing:-0.168px;">Kyle's Test Co...</div>
<svg class="r" style="left:771.5px;top:769px;" width="14" height="10" viewBox="0 0 14 10"><polyline points="1,5 4.8,8.6 12.6,1" fill="none" stroke="#212529" stroke-width="1.9" stroke-linecap="round" stroke-linejoin="round"/></svg>
<div class="t" style="left:839.4px;top:766.62px;font-size:13.5px;line-height:16px;color:#212529;letter-spacing:0.247px;">09-14-23</div>
<div class="t" style="left:917.0px;top:766.62px;font-size:13.5px;line-height:16px;color:#212529;letter-spacing:0.276px;">09-15-23</div>
<svg class="r" style="left:1033px;top:769px;" width="14" height="10" viewBox="0 0 14 10"><polyline points="1,5 4.8,8.6 12.6,1" fill="none" stroke="#212529" stroke-width="1.9" stroke-linecap="round" stroke-linejoin="round"/></svg>
<div class="t" style="left:1099.2px;top:766.69px;font-size:13.3px;line-height:16px;color:#212529;letter-spacing:-0.218px;">A&amp;L TRUCKI...</div>
<div class="t" style="left:1338.8px;top:766.69px;font-size:13.3px;line-height:16px;color:#212529;letter-spacing:-0.147px;">$100.00</div>
<div class="t" style="left:1419.4px;top:766.69px;font-size:13.3px;line-height:16px;color:#1a7ff0;letter-spacing:-0.03px;">$200.00</div>
<div class="t" style="left:1508.6px;top:766.69px;font-size:13.3px;line-height:16px;color:#212529;letter-spacing:-0.197px;">$100.00</div>
<div class="t" style="left:1570.5px;top:766.62px;font-size:13.5px;line-height:16px;color:#212529;letter-spacing:-0.028px;">Test org</div>
<div class="t" style="left:1680.5px;top:766.62px;font-size:13.5px;line-height:16px;color:#212529;letter-spacing:0.028px;">shipref 1</div>
<svg class="r" style="left:1793.6px;top:762.6px;" width="22" height="22" viewBox="0 0 22 22"><circle cx="11" cy="11" r="10.5" fill="#6c757d"/><path d="M11.4,6.2 H14.1 V14.2 H11.4 V9.2 L9.1,10 V7.7 Z" fill="#fff"/></svg>
<svg class="r" style="left:1819px;top:766.5px;" width="15" height="15" viewBox="0 0 15 15"><path d="M0.3,14.4 L1.1,10.2 L10,1.3 a1.4,1.4 0 0 1 2,0 L13.7,3 a1.4,1.4 0 0 1 0,2 L4.8,13.9 Z" fill="#1a7ff5"/><path d="M8.6,2.9 L12.1,6.4" stroke="#fff" stroke-width="0.8"/><path d="M2.6,11.9 L9.4,5.1" stroke="#cfe5ff" stroke-width="0.6"/></svg>
<svg class="r" style="left:1837px;top:768px;" width="14" height="12" viewBox="0 0 14 12"><rect x="0" y="0.1" width="2.7" height="2.6" fill="#1a7ff5"/><rect x="0" y="4.3" width="2.7" height="2.6" fill="#1a7ff5"/><rect x="0" y="8.4" width="2.7" height="2.6" fill="#1a7ff5"/><rect x="4.2" y="0.4" width="8.9" height="2" fill="#1a7ff5"/><rect x="4.2" y="4.6" width="8.9" height="2" fill="#1a7ff5"/><rect x="4.2" y="8.7" width="8.9" height="2" fill="#1a7ff5"/></svg>
<div class="r" style="left:42px;top:828px;width:1819px;height:1px;background:#dee2e6;"></div>
<div class="r" style="left:49px;top:800.3px;width:20px;height:20.0px;background:#007bff;border-radius:4px;"></div>
<svg class="r" style="left:49px;top:800.3px;" width="20" height="20" viewBox="0 0 20 20"><polyline points="3.4,10.1 7.5,13.9 16.3,5.5" fill="none" stroke="#fff" stroke-width="1.3" stroke-linecap="round" stroke-linejoin="round"/></svg>
<div class="t" style="left:87.4px;top:803.62px;font-size:13.5px;line-height:16px;color:#1a7ff0;letter-spacing:0.018px;">116754961</div>
<div class="t" style="left:197.2px;top:803.62px;font-size:13.5px;line-height:16px;color:#212529;letter-spacing:0.026px;">Truckload</div>
<div class="t" style="left:511.3px;top:803.69px;font-size:13.3px;line-height:16px;color:#212529;letter-spacing:-0.168px;">Kyle's Test Co...</div>
<svg class="r" style="left:771.5px;top:806px;" width="14" height="10" viewBox="0 0 14 10"><polyline points="1,5 4.8,8.6 12.6,1" fill="none" stroke="#212529" stroke-width="1.9" stroke-linecap="round" stroke-linejoin="round"/></svg>
<div class="t" style="left:839.4px;top:803.62px;font-size:13.5px;line-height:16px;color:#212529;letter-spacing:0.247px;">09-14-23</div>
<div class="t" style="left:917.0px;top:803.62px;font-size:13.5px;line-height:16px;color:#212529;letter-spacing:0.276px;">09-15-23</div>
<svg class="r" style="left:1033px;top:806px;" width="14" height="10" viewBox="0 0 14 10"><polyline points="1,5 4.8,8.6 12.6,1" fill="none" stroke="#212529" stroke-width="1.9" stroke-linecap="round" stroke-linejoin="round"/></svg>
<div class="t" style="left:1099.2px;top:803.69px;font-size:13.3px;line-height:16px;color:#212529;letter-spacing:-0.218px;">A&amp;L TRUCKI...</div>
<div class="t" style="left:1338.8px;top:803.69px;font-size:13.3px;line-height:16px;color:#212529;letter-spacing:-0.147px;">$100.00</div>
<div class="t" style="left:1419.4px;top:803.69px;font-size:13.3px;line-height:16px;color:#1a7ff0;letter-spacing:-0.03px;">$200.00</div>
<div class="t" style="left:1508.6px;top:803.69px;font-size:13.3px;line-height:16px;color:#212529;letter-spacing:-0.197px;">$100.00</div>
<div class="t" style="left:1570.5px;top:803.62px;font-size:13.5px;line-height:16px;color:#212529;letter-spacing:-0.028px;">Test org</div>
<div class="t" style="left:1680.5px;top:803.62px;font-size:13.5px;line-height:16px;color:#212529;letter-spacing:0.028px;">shipref 1</div>
<svg class="r" style="left:1793.6px;top:799.6px;" width="22" height="22" viewBox="0 0 22 22"><circle cx="11" cy="11" r="10.5" fill="#6c757d"/><path d="M11.4,6.2 H14.1 V14.2 H11.4 V9.2 L9.1,10 V7.7 Z" fill="#fff"/></svg>
<svg class="r" style="left:1819px;top:803.5px;" width="15" height="15" viewBox="0 0 15 15"><path d="M0.3,14.4 L1.1,10.2 L10,1.3 a1.4,1.4 0 0 1 2,0 L13.7,3 a1.4,1.4 0 0 1 0,2 L4.8,13.9 Z" fill="#1a7ff5"/><path d="M8.6,2.9 L12.1,6.4" stroke="#fff" stroke-width="0.8"/><path d="M2.6,11.9 L9.4,5.1" stroke="#cfe5ff" stroke-width="0.6"/></svg>
<svg class="r" style="left:1837px;top:805px;" width="14" height="12" viewBox="0 0 14 12"><rect x="0" y="0.1" width="2.7" height="2.6" fill="#1a7ff5"/><rect x="0" y="4.3" width="2.7" height="2.6" fill="#1a7ff5"/><rect x="0" y="8.4" width="2.7" height="2.6" fill="#1a7ff5"/><rect x="4.2" y="0.4" width="8.9" height="2" fill="#1a7ff5"/><rect x="4.2" y="4.6" width="8.9" height="2" fill="#1a7ff5"/><rect x="4.2" y="8.7" width="8.9" height="2" fill="#1a7ff5"/></svg>
<div class="r" style="left:42px;top:865px;width:1819px;height:1px;background:#dee2e6;"></div>
<div class="r" style="left:49px;top:837.3px;width:20px;height:20.0px;background:#007bff;border-radius:4px;"></div>
<svg class="r" style="left:49px;top:837.3px;" width="20" height="20" viewBox="0 0 20 20"><polyline points="3.4,10.1 7.5,13.9 16.3,5.5" fill="none" stroke="#fff" stroke-width="1.3" stroke-linecap="round" stroke-linejoin="round"/></svg>
<div class="t" style="left:87.4px;top:840.62px;font-size:13.5px;line-height:16px;color:#1a7ff0;letter-spacing:0.018px;">116754971</div>
<div class="t" style="left:197.2px;top:840.62px;font-size:13.5px;line-height:16px;color:#212529;letter-spacing:0.026px;">Truckload</div>
<div class="t" style="left:511.3px;top:840.69px;font-size:13.3px;line-height:16px;color:#212529;letter-spacing:-0.168px;">Kyle's Test Co...</div>
<svg class="r" style="left:771.5px;top:843px;" width="14" height="10" viewBox="0 0 14 10"><polyline points="1,5 4.8,8.6 12.6,1" fill="none" stroke="#212529" stroke-width="1.9" stroke-linecap="round" stroke-linejoin="round"/></svg>
<div class="t" style="left:839.4px;top:840.62px;font-size:13.5px;line-height:16px;color:#212529;letter-spacing:0.247px;">09-14-23</div>
<div class="t" style="left:917.0px;top:840.62px;font-size:13.5px;line-height:16px;color:#212529;letter-spacing:0.276px;">09-15-23</div>
<svg class="r" style="left:1033px;top:843px;" width="14" height="10" viewBox="0 0 14 10"><polyline points="1,5 4.8,8.6 12.6,1" fill="none" stroke="#212529" stroke-width="1.9" stroke-linecap="round" stroke-linejoin="round"/></svg>
<div class="t" style="left:1099.2px;top:840.69px;font-size:13.3px;line-height:16px;color:#212529;letter-spacing:-0.218px;">A&amp;L TRUCKI...</div>
<div class="t" style="left:1338.8px;top:840.69px;font-size:13.3px;line-height:16px;color:#212529;letter-spacing:-0.147px;">$150.00</div>
<div class="t" style="left:1419.4px;top:840.69px;font-size:13.3px;line-height:16px;color:#1a7ff0;letter-spacing:-0.03px;">$350.00</div>
<div class="t" style="left:1508.6px;top:840.69px;font-size:13.3px;line-height:16px;color:#212529;letter-spacing:-0.197px;">$200.00</div>
<div class="t" style="left:1570.5px;top:840.62px;font-size:13.5px;line-height:16px;color:#212529;letter-spacing:-0.028px;">Test org</div>
<div class="t" style="left:1680.5px;top:840.62px;font-size:13.5px;line-height:16px;color:#212529;letter-spacing:0.028px;">shipref 1</div>
<svg class="r" style="left:1793.6px;top:836.6px;" width="22" height="22" viewBox="0 0 22 22"><circle cx="11" cy="11" r="10.5" fill="#6c757d"/><path d="M11.4,6.2 H14.1 V14.2 H11.4 V9.2 L9.1,10 V7.7 Z" fill="#fff"/></svg>
<svg class="r" style="left:1819px;top:840.5px;" width="15" height="15" viewBox="0 0 15 15"><path d="M0.3,14.4 L1.1,10.2 L10,1.3 a1.4,1.4 0 0 1 2,0 L13.7,3 a1.4,1.4 0 0 1 0,2 L4.8,13.9 Z" fill="#1a7ff5"/><path d="M8.6,2.9 L12.1,6.4" stroke="#fff" stroke-width="0.8"/><path d="M2.6,11.9 L9.4,5.1" stroke="#cfe5ff" stroke-width="0.6"/></svg>
<svg class="r" style="left:1837px;top:842px;" width="14" height="12" viewBox="0 0 14 12"><rect x="0" y="0.1" width="2.7" height="2.6" fill="#1a7ff5"/><rect x="0" y="4.3" width="2.7" height="2.6" fill="#1a7ff5"/><rect x="0" y="8.4" width="2.7" height="2.6" fill="#1a7ff5"/><rect x="4.2" y="0.4" width="8.9" height="2" fill="#1a7ff5"/><rect x="4.2" y="4.6" width="8.9" height="2" fill="#1a7ff5"/><rect x="4.2" y="8.7" width="8.9" height="2" fill="#1a7ff5"/></svg>
<div class="r" style="left:42px;top:902px;width:1819px;height:1px;background:#dee2e6;"></div>
<div class="r" style="left:49px;top:874.3px;width:20px;height:20.0px;background:#007bff;border-radius:4px;"></div>
<svg class="r" style="left:49px;top:874.3px;" width="20" height="20" viewBox="0 0 20 20"><polyline points="3.4,10.1 7.5,13.9 16.3,5.5" fill="none" stroke="#fff" stroke-width="1.3" stroke-linecap="round" stroke-linejoin="round"/></svg>
<div class="t" style="left:87.4px;top:877.62px;font-size:13.5px;line-height:16px;color:#1a7ff0;letter-spacing:0.018px;">116754986</div>
<div class="t" style="left:197.2px;top:877.62px;font-size:13.5px;line-height:16px;color:#212529;letter-spacing:0.026px;">Truckload</div>
<div class="t" style="left:511.3px;top:877.69px;font-size:13.3px;line-height:16px;color:#212529;letter-spacing:-0.168px;">Kyle's Test Co...</div>
<svg class="r" style="left:771.5px;top:880px;" width="14" height="10" viewBox="0 0 14 10"><polyline points="1,5 4.8,8.6 12.6,1" fill="none" stroke="#212529" stroke-width="1.9" stroke-linecap="round" stroke-linejoin="round"/></svg>
<div class="t" style="left:839.4px;top:877.62px;font-size:13.5px;line-height:16px;color:#212529;letter-spacing:0.247px;">09-14-23</div>
<div class="t" style="left:917.0px;top:877.62px;font-size:13.5px;line-height:16px;color:#212529;letter-spacing:0.276px;">09-15-23</div>
<svg class="r" style="left:1033px;top:880px;" width="14" height="10" viewBox="0 0 14 10"><polyline points="1,5 4.8,8.6 12.6,1" fill="none" stroke="#212529" stroke-width="1.9" stroke-linecap="round" stroke-linejoin="round"/></svg>
<div class="t" style="left:1099.2px;top:877.69px;font-size:13.3px;line-height:16px;color:#212529;letter-spacing:-0.218px;">A&amp;L TRUCKI...</div>
<div class="t" style="left:1338.8px;top:877.69px;font-size:13.3px;line-height:16px;color:#212529;letter-spacing:-0.147px;">$150.00</div>
<div class="t" style="left:1419.4px;top:877.69px;font-size:13.3px;line-height:16px;color:#1a7ff0;letter-spacing:-0.03px;">$350.00</div>
<div class="t" style="left:1508.6px;top:877.69px;font-size:13.3px;line-height:16px;color:#212529;letter-spacing:-0.197px;">$200.00</div>
<div class="t" style="left:1570.5px;top:877.62px;font-size:13.5px;line-height:16px;color:#212529;letter-spacing:-0.028px;">Test org</div>
<div class="t" style="left:1680.5px;top:877.62px;font-size:13.5px;line-height:16px;color:#212529;letter-spacing:0.028px;">shipref 1</div>
<svg class="r" style="left:1793.6px;top:873.6px;" width="22" height="22" viewBox="0 0 22 22"><circle cx="11" cy="11" r="10.5" fill="#6c757d"/><path d="M11.4,6.2 H14.1 V14.2 H11.4 V9.2 L9.1,10 V7.7 Z" fill="#fff"/></svg>
<svg class="r" style="left:1819px;top:877.5px;" width="15" height="15" viewBox="0 0 15 15"><path d="M0.3,14.4 L1.1,10.2 L10,1.3 a1.4,1.4 0 0 1 2,0 L13.7,3 a1.4,1.4 0 0 1 0,2 L4.8,13.9 Z" fill="#1a7ff5"/><path d="M8.6,2.9 L12.1,6.4" stroke="#fff" stroke-width="0.8"/><path d="M2.6,11.9 L9.4,5.1" stroke="#cfe5ff" stroke-width="0.6"/></svg>
<svg class="r" style="left:1837px;top:879px;" width="14" height="12" viewBox="0 0 14 12"><rect x="0" y="0.1" width="2.7" height="2.6" fill="#1a7ff5"/><rect x="0" y="4.3" width="2.7" height="2.6" fill="#1a7ff5"/><rect x="0" y="8.4" width="2.7" height="2.6" fill="#1a7ff5"/><rect x="4.2" y="0.4" width="8.9" height="2" fill="#1a7ff5"/><rect x="4.2" y="4.6" width="8.9" height="2" fill="#1a7ff5"/><rect x="4.2" y="8.7" width="8.9" height="2" fill="#1a7ff5"/></svg>
<div class="r" style="left:0px;top:910px;width:1920px;height:1px;background:#ffffff;"></div>
<div class="r" style="left:0px;top:911px;width:1920px;height:1px;background:#2b2b2b;"></div>
<div class="r" style="left:1827px;top:835px;width:60px;height:60px;border-radius:50%;background:#08a3c2;box-shadow:0 2px 6px rgba(0,0,0,0.25);"></div>
<svg class="r" style="left:1840px;top:848px;" width="34" height="34" viewBox="0 0 34 34"><path d="M7.5,3.2 Q19,1.6 31,2.6 Q33.2,11 32,21 L30.3,21 Q31,12 29.3,5 Q19,3.9 7.5,4.9 Z" fill="#fff"/><path d="M2.6,7.6 Q15,5.6 27.7,7.8 Q29.6,17 27.9,26.4 Q21.5,27.6 16.8,27.3 L14.6,31.5 L12.5,27.2 Q7,27 2.5,26.3 Q0.9,17 2.6,7.6 Z" fill="#fff"/></svg>
<svg class="r" style="left:755px;top:581px;" width="14" height="22" viewBox="0 0 14 22"><path d="M1,1 V17.5 L5,13.7 L8,20 L10.6,19 L7.7,12.6 H13 Z" fill="#fff" stroke="#000" stroke-width="1" stroke-linejoin="round"/></svg>
</body></html>
